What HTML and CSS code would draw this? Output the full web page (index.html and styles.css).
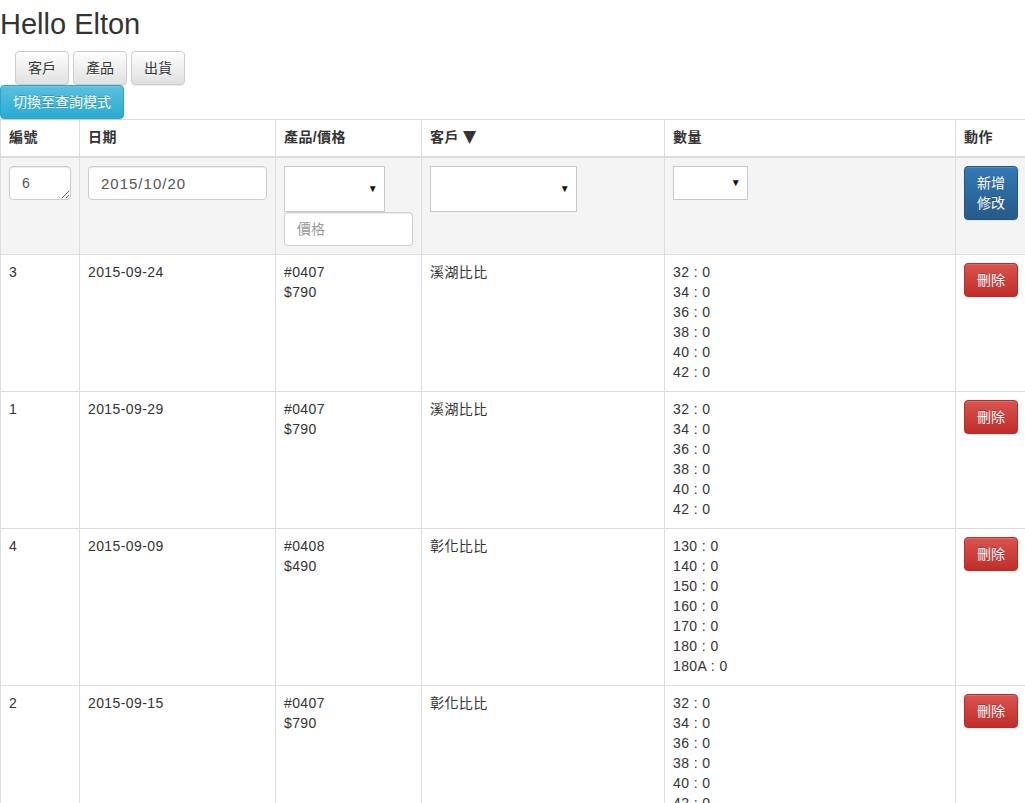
FILE: index.html
```html
<!DOCTYPE html>
<html lang="zh-Hant">
<head>
<meta charset="utf-8">
<title>Hello Elton</title>
<link rel="stylesheet" href="styles.css">
</head>
<body>
<h1 class="title">Hello Elton</h1>
<div class="nav-buttons">
  <button class="btn btn-default">客戶</button>
  <button class="btn btn-default">產品</button>
  <button class="btn btn-default">出貨</button>
</div>
<div class="mode-row">
  <button class="btn btn-info">切換至查詢模式</button>
</div>
<div class="table-wrap">
<table class="grid">
  <colgroup>
    <col class="c1"><col class="c2"><col class="c3"><col class="c4"><col class="c5"><col class="c6">
  </colgroup>
  <thead>
    <tr>
      <th>編號</th>
      <th>日期</th>
      <th>產品/價格</th>
      <th>客戶 <span class="sort">▼</span></th>
      <th>數量</th>
      <th>動作</th>
    </tr>
  </thead>
  <tbody>
    <tr class="form-row">
      <td><textarea class="ctl id-box">6</textarea></td>
      <td><input class="ctl date-box" type="text" value="2015/10/20"></td>
      <td>
        <div class="sel sel-product"><span class="arrow">▼</span></div>
        <input class="ctl price-box" type="text" placeholder="價格">
      </td>
      <td><div class="sel sel-customer"><span class="arrow">▼</span></div></td>
      <td><div class="sel sel-qty"><span class="arrow">▼</span></div></td>
      <td><button class="btn btn-primary btn-tall">新增<br>修改</button></td>
    </tr>
    <tr>
      <td class="t">3</td>
      <td class="t">2015-09-24</td>
      <td class="t">#0407<br>$790</td>
      <td class="t">溪湖比比</td>
      <td class="t">32 : 0<br>34 : 0<br>36 : 0<br>38 : 0<br>40 : 0<br>42 : 0</td>
      <td><button class="btn btn-danger">刪除</button></td>
    </tr>
    <tr>
      <td class="t">1</td>
      <td class="t">2015-09-29</td>
      <td class="t">#0407<br>$790</td>
      <td class="t">溪湖比比</td>
      <td class="t">32 : 0<br>34 : 0<br>36 : 0<br>38 : 0<br>40 : 0<br>42 : 0</td>
      <td><button class="btn btn-danger">刪除</button></td>
    </tr>
    <tr>
      <td class="t">4</td>
      <td class="t">2015-09-09</td>
      <td class="t">#0408<br>$490</td>
      <td class="t">彰化比比</td>
      <td class="t">130 : 0<br>140 : 0<br>150 : 0<br>160 : 0<br>170 : 0<br>180 : 0<br>180A : 0</td>
      <td><button class="btn btn-danger">刪除</button></td>
    </tr>
    <tr>
      <td class="t">2</td>
      <td class="t">2015-09-15</td>
      <td class="t">#0407<br>$790</td>
      <td class="t">彰化比比</td>
      <td class="t">32 : 0<br>34 : 0<br>36 : 0<br>38 : 0<br>40 : 0<br>42 : 0</td>
      <td><button class="btn btn-danger">刪除</button></td>
    </tr>
  </tbody>
</table>
</div>
</body>
</html>
```

FILE: styles.css
```css
html, body {
  margin: 0;
  padding: 0;
  background: #fff;
}
body {
  font-family: "Liberation Sans", "Noto Sans CJK TC", sans-serif;
  font-size: 14px;
  line-height: 20px;
  color: #333;
}
.title {
  font-size: 29px;
  font-weight: normal;
  line-height: 33px;
  margin: 8px 0 10px 0;
  color: #333;
}
.nav-buttons {
  display: flex;
  gap: 4px;
  padding-left: 15px;
}
.mode-row {
  display: flex;
}
.btn {
  display: inline-block;
  box-sizing: border-box;
  font-family: "Liberation Sans", "Noto Sans CJK TC", sans-serif;
  font-size: 14px;
  line-height: 20px;
  letter-spacing: 0;
  padding: 6px 12px;
  border: 1px solid transparent;
  border-radius: 4px;
  cursor: pointer;
  margin: 0;
  white-space: nowrap;
}
.btn-default {
  color: #333;
  border-color: #ccc;
  background: linear-gradient(to bottom, #fff 0%, #e0e0e0 100%);
  text-shadow: 0 1px 0 #fff;
  box-shadow: inset 0 1px 0 rgba(255,255,255,.15), 0 1px 1px rgba(0,0,0,.075);
}
.btn-info {
  color: #fff;
  border-color: #28a4c9;
  background: linear-gradient(to bottom, #5bc0de 0%, #2aabd2 100%);
  text-shadow: 0 -1px 0 rgba(0,0,0,.2);
  box-shadow: inset 0 1px 0 rgba(255,255,255,.15), 0 1px 1px rgba(0,0,0,.075);
}
.btn-primary {
  color: #fff;
  border-color: #245580;
  background: linear-gradient(to bottom, #337ab7 0%, #265a88 100%);
  text-shadow: 0 -1px 0 rgba(0,0,0,.2);
  box-shadow: inset 0 1px 0 rgba(255,255,255,.15), 0 1px 1px rgba(0,0,0,.075);
}
.btn-danger {
  color: #fff;
  border-color: #b92c28;
  background: linear-gradient(to bottom, #d9534f 0%, #c12e2a 100%);
  text-shadow: 0 -1px 0 rgba(0,0,0,.2);
  box-shadow: inset 0 1px 0 rgba(255,255,255,.15), 0 1px 1px rgba(0,0,0,.075);
}
.btn-tall {
  white-space: normal;
  width: 54px;
  text-align: center;
}
.table-wrap {
  width: 100%;
  overflow: hidden;
}
.grid {
  border-collapse: collapse;
  border-spacing: 0;
  table-layout: fixed;
  width: 1040px;
}
.c1 { width: 79px; }
.c2 { width: 196px; }
.c3 { width: 146px; }
.c4 { width: 243px; }
.c5 { width: 291px; }
.c6 { width: 85px; }
.grid th,
.grid td {
  border: 1px solid #ddd;
  padding: 8px;
  text-align: left;
  vertical-align: top;
  line-height: 20px;
  letter-spacing: 0.4px;
}
.grid th {
  font-weight: bold;
  border-bottom: 2px solid #ddd;
  padding: 7px 8px 9px 8px;
}
.grid td.t {
  padding: 7px 8px 9px 8px;
}
.sort {
  font-family: "DejaVu Sans", sans-serif;
  font-size: 17px;
  line-height: 0;
}
.form-row td {
  background: #f4f4f4;
}
.ctl {
  display: block;
  box-sizing: border-box;
  margin: 0;
  font-family: "Liberation Sans", "Noto Sans CJK TC", sans-serif;
  font-size: 14px;
  line-height: 20px;
  letter-spacing: 0;
  color: #555;
  background: #fff;
  border: 1px solid #ccc;
  border-radius: 4px;
  box-shadow: inset 0 1px 1px rgba(0,0,0,.075);
  padding: 6px 12px;
  height: 34px;
}
.ctl::placeholder {
  color: #999;
}
.id-box {
  width: 62px;
  resize: both;
  overflow: hidden;
}
.date-box {
  width: 100%;
  font-size: 15px;
  letter-spacing: 1px;
}
.price-box {
  width: 100%;
}
.sel {
  box-sizing: border-box;
  background: #fff;
  border: 1px solid #c8c8c8;
  display: flex;
  align-items: center;
  justify-content: flex-end;
  padding-right: 6px;
}
.arrow {
  font-size: 10px;
  line-height: 10px;
  color: #111;
}
.sel-product { width: 101px; height: 46px; }
.sel-customer { width: 147px; height: 46px; }
.sel-qty { width: 75px; height: 34px; }
```
